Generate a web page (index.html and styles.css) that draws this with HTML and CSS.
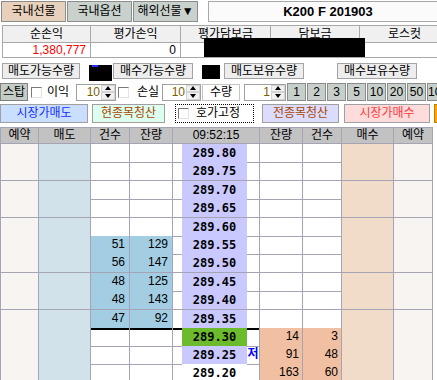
FILE: index.html
```html
<!DOCTYPE html>
<html>
 <head>
  <meta charset="utf-8">
  <title>선물 호가주문</title>
  <link rel="stylesheet" href="styles.css">
 </head>
 <body>
  <div class="topbar">
    <button class="tab on">국내선물</button>
    <button class="tab">국내옵션</button>
    <button class="tab">해외선물▼</button>
    <div class="code">K200 F 201903</div>
  </div>

  <div class="summary">
    <div class="sum-row sum-head">
      <span>순손익</span><span>평가손익</span><span>평가담보금</span><span>담보금</span><span>로스컷</span>
    </div>
    <div class="sum-row sum-body">
      <span class="red">1,380,777</span><span>0</span><span></span><span></span><span></span>
    </div>
    <div class="mask"></div>
  </div>

  <div class="qty">
    <button class="qbtn q1">매도가능수량</button>
    <span class="hide h1"></span>
    <button class="qbtn q2">매수가능수량</button>
    <span class="hide h2"></span>
    <button class="qbtn q3">매도보유수량</button>
    <button class="qbtn q4">매수보유수량</button>
  </div>

  <div class="stop">
    <button class="stop-btn">스탑</button>
    <input type="checkbox" class="chk c1">
    <span class="lbl l1">이익</span>
    <div class="spin s1"><span class="val">10</span><span class="arrows"><i class="up"></i><i class="down"></i></span></div>
    <input type="checkbox" class="chk c2">
    <span class="lbl l2">손실</span>
    <div class="spin s2"><span class="val">10</span><span class="arrows"><i class="up"></i><i class="down"></i></span></div>
    <span class="qty-lbl">수량</span>
    <div class="spin s3"><span class="val">1</span><span class="arrows"><i class="up"></i><i class="down"></i></span></div>
    <button class="nbtn first">1</button>
    <button class="nbtn">2</button>
    <button class="nbtn">3</button>
    <button class="nbtn">5</button>
    <button class="nbtn">10</button>
    <button class="nbtn">20</button>
    <button class="nbtn">50</button>
    <button class="nbtn">100</button>
  </div>

  <div class="orders">
    <button class="ord sell-mkt">시장가매도</button>
    <button class="ord close-one">현종목청산</button>
    <label class="fix"><input type="checkbox" class="chk"><span>호가고정</span></label>
    <button class="ord close-all">전종목청산</button>
    <button class="ord buy-mkt">시장가매수</button>
    <span class="extra"></span>
  </div>

  <div class="book">
    <div class="head">
      <span>예약</span><span>매도</span><span>건수</span><span>잔량</span><span class="time">09:52:15</span><span>잔량</span><span>건수</span><span>매수</span><span>예약</span>
    </div>
    <div class="row"><span class="rsv"></span><span class="sell"></span><span></span><span></span><span class="gap"></span><span class="price">289.80</span><span class="mark"></span><span></span><span></span><span class="buy"></span><span class="rsv"></span></div>
    <div class="row"><span class="rsv"></span><span class="sell"></span><span></span><span></span><span class="gap"></span><span class="price">289.75</span><span class="mark"></span><span></span><span></span><span class="buy"></span><span class="rsv"></span></div>
    <div class="row"><span class="rsv"></span><span class="sell"></span><span></span><span></span><span class="gap"></span><span class="price">289.70</span><span class="mark"></span><span></span><span></span><span class="buy"></span><span class="rsv"></span></div>
    <div class="row"><span class="rsv"></span><span class="sell"></span><span></span><span></span><span class="gap"></span><span class="price">289.65</span><span class="mark"></span><span></span><span></span><span class="buy"></span><span class="rsv"></span></div>
    <div class="row"><span class="rsv"></span><span class="sell"></span><span></span><span></span><span class="gap"></span><span class="price">289.60</span><span class="mark"></span><span></span><span></span><span class="buy"></span><span class="rsv"></span></div>
    <div class="row"><span class="rsv"></span><span class="sell"></span><span class="ask">51</span><span class="ask">129</span><span class="gap"></span><span class="price">289.55</span><span class="mark"></span><span></span><span></span><span class="buy"></span><span class="rsv"></span></div>
    <div class="row"><span class="rsv"></span><span class="sell"></span><span class="ask">56</span><span class="ask">147</span><span class="gap"></span><span class="price">289.50</span><span class="mark"></span><span></span><span></span><span class="buy"></span><span class="rsv"></span></div>
    <div class="row"><span class="rsv"></span><span class="sell"></span><span class="ask">48</span><span class="ask">125</span><span class="gap"></span><span class="price">289.45</span><span class="mark"></span><span></span><span></span><span class="buy"></span><span class="rsv"></span></div>
    <div class="row"><span class="rsv"></span><span class="sell"></span><span class="ask">48</span><span class="ask">143</span><span class="gap"></span><span class="price">289.40</span><span class="mark"></span><span></span><span></span><span class="buy"></span><span class="rsv"></span></div>
    <div class="row mid"><span class="rsv"></span><span class="sell"></span><span class="ask">47</span><span class="ask">92</span><span class="gap"></span><span class="price">289.35</span><span class="mark"></span><span></span><span></span><span class="buy"></span><span class="rsv"></span></div>
    <div class="row bidrow"><span class="rsv"></span><span class="sell"></span><span></span><span></span><span class="gap"></span><span class="price now">289.30</span><span class="mark"></span><span class="bid">14</span><span class="bid">3</span><span class="buy"></span><span class="rsv"></span></div>
    <div class="row bidrow"><span class="rsv"></span><span class="sell"></span><span></span><span></span><span class="gap"></span><span class="price">289.25</span><span class="mark">저</span><span class="bid">91</span><span class="bid">48</span><span class="buy"></span><span class="rsv"></span></div>
    <div class="row bidrow"><span class="rsv"></span><span class="sell"></span><span></span><span></span><span class="gap"></span><span class="price plain">289.20</span><span class="mark"></span><span class="bid">163</span><span class="bid">60</span><span class="buy"></span><span class="rsv"></span></div>
  </div>
 </body>
</html>
```

FILE: styles.css
```css
* {
  margin: 0;
  padding: 0;
  box-sizing: border-box;
}
body {
  width: 437px;
  height: 380px;
  overflow: hidden;
  background: #fff;
  color: #000;
  font: 12px "Liberation Sans", "Noto Sans CJK KR", sans-serif;
}
button {
  font: inherit;
  color: inherit;
  padding: 0;
}
.topbar > *,
.qty > *,
.stop > *,
.orders > * {
  flex-shrink: 0;
}

/* 상단 탭 */
.topbar {
  display: flex;
  height: 22px;
  padding: 1px 0 0 1px;
}
.tab {
  width: 65px;
  height: 21px;
  margin-right: 1px;
  border: 1px solid #8c8c8c;
  background: #c9d1cd;
  line-height: 19px;
}
.tab.on {
  background: #e7d0bc;
}
.code {
  width: 240px;
  height: 21px;
  margin-left: 9px;
  border: 1px solid #a8a8a8;
  background: #fbfbfb;
  font-weight: bold;
  font-size: 13px;
  line-height: 19px;
  text-align: center;
}

/* 손익 요약 */
.summary {
  position: relative;
  margin: 3px 0 0 2px;
  border-left: 1px solid #a8a8a8;
  border-top: 1px solid #a8a8a8;
}
.sum-row {
  display: grid;
  grid-template-columns: 88px 90px 90px 89px 90px;
}
.sum-row span {
  border-right: 1px solid #a8a8a8;
  border-bottom: 1px solid #a8a8a8;
}
.sum-head span {
  height: 17px;
  background: #f0f0f0;
  text-align: center;
  line-height: 16px;
}
.sum-body span {
  height: 15px;
  padding-right: 4px;
  text-align: right;
  line-height: 14px;
}
.sum-body .red {
  color: #ff0000;
}
.mask {
  position: absolute;
  left: 201px;
  top: 12px;
  width: 161px;
  height: 19px;
  background: #000;
}

/* 가능/보유 수량 */
.qty {
  display: flex;
  height: 16px;
  margin-top: 5px;
}
.qbtn {
  width: 80px;
  height: 16px;
  border: 1px solid #a4a4a4;
  background: #ededed;
  line-height: 14px;
}
.q1 {
  width: 78px;
  margin-left: 2px;
}
.hide {
  background: #000;
}
.h1 {
  width: 23px;
  height: 16px;
  margin: 2px 0 0 9px;
  background: linear-gradient(#2030ff, #2030ff) 3px 0 / 6px 2px no-repeat, #000;
}
.q2 {
  margin-left: 1px;
}
.h2 {
  width: 18px;
  height: 14px;
  margin: 2px 0 0 9px;
}
.q3 {
  margin-left: 4px;
}
.q4 {
  margin-left: 33px;
}

/* 스탑 / 수량 */
.stop {
  display: flex;
  align-items: center;
  height: 18px;
  margin-top: 4px;
}
.stop-btn {
  width: 28px;
  height: 18px;
  border: 1px solid #808080;
  background: #c4ccc6;
  line-height: 16px;
}
.chk {
  appearance: none;
  width: 11px;
  height: 11px;
  border: 1px solid;
  border-color: #7a7a7a #e2e2e2 #e2e2e2 #7a7a7a;
  background: #fff;
}
.c1 {
  margin-left: 3px;
}
.c2 {
  margin-left: 2px;
}
.lbl {
  line-height: 17px;
}
.l1 {
  width: 34px;
  padding-left: 5px;
}
.l2 {
  width: 33px;
  padding-left: 8px;
}
.spin {
  display: flex;
  height: 17px;
  border: 1px solid #a0a0a0;
  background: #fff;
}
.s1 {
  width: 40px;
}
.s2 {
  width: 39px;
}
.s3 {
  width: 42px;
  margin-left: 4px;
}
.spin .val {
  flex: 1;
  padding-right: 1px;
  color: #7a6000;
  text-align: right;
  line-height: 15px;
}
.spin .arrows {
  width: 14px;
  display: flex;
  flex-direction: column;
}
.spin .arrows i {
  flex: 1;
  display: flex;
  align-items: center;
  justify-content: center;
  border: 1px solid #d4d4d4;
  background: #f0f0f0;
}
.spin .up::before {
  content: "";
  border-left: 3px solid transparent;
  border-right: 3px solid transparent;
  border-bottom: 4px solid #000;
}
.spin .down::before {
  content: "";
  border-left: 3px solid transparent;
  border-right: 3px solid transparent;
  border-top: 4px solid #000;
}
.qty-lbl {
  width: 38px;
  height: 17px;
  margin-left: 1px;
  border: 1px solid #c4c4c4;
  text-align: center;
  line-height: 15px;
}
.nbtn {
  width: 19px;
  height: 18px;
  margin-left: 1px;
  border: 1px solid #8c8c8c;
  background: #c6cfc9;
  line-height: 16px;
}
.nbtn.first {
  margin-left: 1px;
}

/* 주문 버튼 */
.orders {
  display: flex;
  height: 19px;
  margin-top: 3px;
}
.ord {
  height: 19px;
  border: 1px solid #a0a0a0;
  line-height: 17px;
}
.sell-mkt {
  width: 88px;
  background: #cadfff;
  color: #1030ff;
}
.close-one {
  width: 73px;
  margin-left: 4px;
  background: #dcfff0;
  color: #a84800;
}
.fix {
  display: flex;
  align-items: center;
  width: 79px;
  margin-left: 10px;
  border: 1px dotted #000;
}
.fix .chk {
  margin-left: 2px;
}
.fix span {
  margin-left: 7px;
  line-height: 17px;
}
.close-all {
  width: 77px;
  margin-left: 8px;
  background: #dcdcff;
  color: #a84800;
}
.buy-mkt {
  width: 86px;
  margin-left: 5px;
  background: #ffdcdc;
  color: #ff3838;
}
.extra {
  width: 10px;
  margin-left: 4px;
  border: 1px solid #c08000;
  background: #ffa400;
}

/* 호가창 */
.book {
  width: 433px;
  margin-top: 4px;
  border-left: 1px solid #a4a4b4;
  border-top: 1px solid #a4a4b4;
}
.head,
.row {
  display: grid;
}
.head {
  grid-template-columns: 38px 52px 39px 43px 87px 43px 39px 52px 39px;
  height: 16px;
}
.row {
  grid-template-columns: 38px 52px 39px 43px 9px 65px 13px 43px 39px 52px 39px;
  height: 18.4px;
}
.row.bidrow {
  height: 18px;
}
.head span,
.row span {
  border-right: 1px solid #a4a4b4;
  border-bottom: 1px solid #a4a4b4;
}
.head span {
  background: #c2c2c2;
  text-align: center;
  line-height: 15px;
}
.row span {
  padding-right: 4px;
  text-align: right;
  line-height: 17px;
}
.row.mid span {
  border-bottom: 2px solid #000;
}
.row .gap,
.row .price {
  border-right: none;
}
.row .rsv {
  background: #f7f4f1;
}
.row .sell {
  background: #d1e2ea;
}
.row .buy {
  background: #f1dcc9;
}
.row .ask {
  background: #a2cde3;
}
.row .bid {
  background: #f1bfa1;
  padding-right: 3px;
}
.row .price {
  padding: 0;
  background: #c9c9ff;
  font: bold 12px "DejaVu Sans Mono", monospace;
  text-align: center;
  line-height: 18px;
}
.row .price.now {
  background: #6cbb2c;
}
.row .price.plain {
  background: #fff;
}
.row .mark {
  padding: 0;
  color: #0000ff;
  font-weight: bold;
  text-align: center;
}
```
